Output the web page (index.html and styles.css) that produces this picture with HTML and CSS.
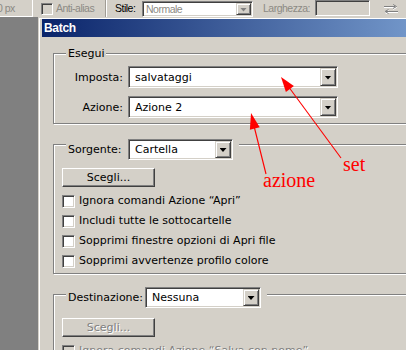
FILE: index.html
```html
<!DOCTYPE html>
<html lang="it">
<head>
<meta charset="utf-8">
<title>Batch</title>
<link rel="stylesheet" href="styles.css">
</head>
<body>
<div class="page">
  <div class="toolbar">
    <div class="tb-field"><span>0 px</span></div>
    <span class="tb-check"></span>
    <span class="tb-label dis tb-aa">Anti-alias</span>
    <span class="tb-sep"></span>
    <span class="tb-label tb-stile">Stile:</span>
    <div class="tb-select"><span class="tb-sel-text">Normale</span><span class="tb-drop"><i class="arrow arrow-dis"></i></span></div>
    <span class="tb-label dis tb-larg">Larghezza:</span>
    <div class="tb-input"></div>
    <svg class="tb-swap" width="16" height="10" viewBox="0 0 16 10">
      <path d="M1 3.5H12M10 1.5L13.5 3.5L10 5.5" fill="none" stroke="#fff" stroke-width="1"/>
      <path d="M1 2.5H12M10 0.5L13.5 2.5L10 4.5" fill="none" stroke="#808080" stroke-width="1"/>
      <path d="M3 8.5H15M5.5 6.5L2 8.5L5.5 10.5" fill="none" stroke="#fff" stroke-width="1"/>
      <path d="M3 7.5H15M5.5 5.5L2 7.5L5.5 9.5" fill="none" stroke="#808080" stroke-width="1"/>
    </svg>
  </div>

  <div class="workspace">
    <div class="side"></div>
    <div class="dialog">
      <div class="titlebar">Batch</div>
      <div class="dlg-body">

        <div class="group g-esegui">
          <div class="legend"><span class="legend-text">Esegui</span></div>
          <div class="form-grid">
            <span class="f-label">Imposta:</span>
            <div class="select sel-wide"><span class="val">salvataggi</span><span class="drop"><i class="arrow"></i></span></div>
            <span class="f-label">Azione:</span>
            <div class="select sel-wide"><span class="val">Azione 2</span><span class="drop"><i class="arrow"></i></span></div>
          </div>
        </div>

        <div class="group g-src">
          <div class="legend legend-ctrl">
            <span class="lbl lbl-src">Sorgente:</span>
            <div class="select sel-src"><span class="val">Cartella</span><span class="drop"><i class="arrow"></i></span></div>
          </div>
          <div class="btn">Scegli...</div>
          <div class="checks">
            <div class="check"><span class="box"></span><span>Ignora comandi Azione “Apri”</span></div>
            <div class="check"><span class="box"></span><span>Includi tutte le sottocartelle</span></div>
            <div class="check"><span class="box"></span><span>Sopprimi finestre opzioni di Apri file</span></div>
            <div class="check"><span class="box"></span><span>Sopprimi avvertenze profilo colore</span></div>
          </div>
        </div>

        <div class="group g-dst">
          <div class="legend legend-ctrl legend-dst">
            <span class="lbl lbl-dst">Destinazione:</span>
            <div class="select sel-dst"><span class="val">Nessuna</span><span class="drop"><i class="arrow"></i></span></div>
          </div>
          <div class="btn btn-dis">Scegli...</div>
          <div class="checks checks-dis">
            <div class="check"><span class="box box-dis"></span><span class="dis-text">Ignora comandi Azione “Salva con nome”</span></div>
          </div>
        </div>

      </div>
    </div>
  </div>

  <svg class="annot" width="406" height="350" viewBox="0 0 406 350">
    <line x1="341" y1="158" x2="288" y2="86" stroke="#ff0000" stroke-width="1.1"/>
    <polygon points="281,77 293.9,86.1 285.9,92.1" fill="#ff0000"/>
    <line x1="266" y1="174" x2="254" y2="126" stroke="#ff0000" stroke-width="1.1"/>
    <polygon points="251,113 259.7,127.3 249.9,129.7" fill="#ff0000"/>
  </svg>
  <span class="note note-set">set</span>
  <span class="note note-azione">azione</span>
</div>
</body>
</html>
```

FILE: styles.css
```css
* { box-sizing: border-box; }
html, body { margin: 0; padding: 0; }
body {
  width: 406px;
  height: 350px;
  overflow: hidden;
  background: #d4d0c8;
  font-family: "DejaVu Sans", sans-serif;
  font-size: 11px;
  color: #000;
}
.page {
  position: relative;
  width: 406px;
  height: 350px;
  overflow: hidden;
}

/* ---------- toolbar ---------- */
.toolbar {
  display: flex;
  align-items: flex-start;
  height: 17px;
  background: #d4d0c8;
  font-family: "Liberation Sans", sans-serif;
  font-size: 10.5px;
  letter-spacing: -0.5px;
  white-space: nowrap;
}
.tb-field {
  flex: none;
  width: 33px;
  height: 17px;
  border-right: 1px solid #fff;
  border-bottom: 1px solid #fff;
  overflow: hidden;
  line-height: 16px;
  color: #8c8a84;
  text-indent: -3px;
}
.tb-check {
  flex: none;
  width: 12px;
  height: 12px;
  margin: 3px 0 0 8px;
  border: 1px solid;
  border-color: #808080 #fff #fff #808080;
  box-shadow: inset 1px 1px #404040, inset -1px -1px #d4d0c8;
  background: #d4d0c8;
}
.tb-label { flex: none; line-height: 17px; }
.tb-label.dis { color: #8c8a84; }
.tb-aa { width: 49px; margin-left: 3px; }
.tb-sep {
  flex: none;
  width: 2px;
  height: 17px;
  border-left: 1px solid #a09c94;
  border-right: 1px solid #fff;
}
.tb-stile { width: 27px; margin-left: 8px; }
.tb-select {
  flex: none;
  display: flex;
  width: 111px;
  height: 16px;
  margin-top: 1px;
  background: #fff;
  border: 1px solid;
  border-color: #808080 #fff #fff #808080;
  box-shadow: inset 1px 1px #404040, inset -1px -1px #d4d0c8;
  padding: 1px;
}
.tb-sel-text {
  flex: 1;
  padding-left: 2px;
  line-height: 12px;
  color: #8c8a84;
}
.tb-drop {
  flex: none;
  width: 15px;
  height: 12px;
  background: #d4d0c8;
  border: 1px solid;
  border-color: #d4d0c8 #404040 #404040 #d4d0c8;
  box-shadow: inset 1px 1px #fff, inset -1px -1px #808080;
  display: flex;
  align-items: center;
  justify-content: center;
}
.tb-larg { width: 52px; margin-left: 10px; }
.tb-input {
  flex: none;
  width: 55px;
  height: 16px;
  border: 1px solid;
  border-color: #808080 #fff #fff #808080;
  box-shadow: inset 1px 1px #404040;
  background: #d4d0c8;
}
.tb-swap { flex: none; margin: 4px 0 0 13px; display: block; }

/* ---------- workspace & dialog ---------- */
.workspace {
  display: flex;
  height: 333px;
}
.side {
  flex: none;
  width: 38px;
  background: #808080;
}
.dialog {
  flex: none;
  width: 640px;
  background: #d4d0c8;
  border-top: 1px solid #d4d0c8;
  border-left: 1px solid #d4d0c8;
  box-shadow: inset 1px 1px #fff;
  padding: 1px 0 0 3px;
}
.titlebar {
  height: 18px;
  line-height: 18px;
  padding-left: 2px;
  background: linear-gradient(to right, #0a246a 0px, #7195c8 364px, #8aaad6 600px);
  color: #fff;
  font-family: "Liberation Sans", sans-serif;
  font-weight: bold;
  font-size: 12px;
  letter-spacing: -0.3px;
}
.dlg-body {
  padding-left: 11px;
}

/* ---------- groups ---------- */
.group {
  width: 600px;
  border: 1px solid #808080;
  box-shadow: inset 1px 1px #fff, 1px 1px #fff;
}
.g-esegui { margin-top: 16px; padding-bottom: 5px; }
.g-src { margin-top: 20px; padding-bottom: 2px; }
.g-dst { margin-top: 20px; }

.legend {
  display: flex;
  width: max-content;
  margin: -7px 0 0 12px;
  line-height: 13px;
}
.legend-text {
  background: #d4d0c8;
  padding: 0 2px;
}
.legend-ctrl {
  align-items: center;
  margin-top: -6px;
  padding: 0 6px 0 2px;
  background: #d4d0c8;
  gap: 6px;
}
.legend-dst { margin-top: -8px; }
.lbl { white-space: nowrap; }
.lbl-src { width: 54px; }
.lbl-dst { width: 71px; }

.form-grid {
  display: grid;
  grid-template-columns: 61px 210px;
  column-gap: 5px;
  row-gap: 8px;
  margin-top: 6px;
  padding-left: 8px;
  align-items: center;
}
.f-label { text-align: right; white-space: nowrap; }

/* ---------- select ---------- */
.select {
  display: flex;
  height: 22px;
  background: #fff;
  border: 1px solid;
  border-color: #808080 #fff #fff #808080;
  box-shadow: inset 1px 1px #404040, inset -1px -1px #d4d0c8;
  padding: 1px;
}
.sel-src { width: 105px; height: 21px; }
.sel-dst { width: 116px; height: 21px; }
.val {
  flex: 1;
  padding-left: 5px;
  display: flex;
  align-items: center;
  white-space: nowrap;
  overflow: hidden;
}
.drop {
  flex: none;
  width: 16px;
  background: #d4d0c8;
  border: 1px solid;
  border-color: #d4d0c8 #404040 #404040 #d4d0c8;
  box-shadow: inset 1px 1px #fff, inset -1px -1px #808080;
  display: flex;
  align-items: center;
  justify-content: center;
}
.arrow {
  display: block;
  width: 7px;
  height: 4px;
  margin-top: 1px;
  background: #000;
  clip-path: polygon(0 0, 100% 0, 50% 100%);
}
.arrow-dis { background: #808080; width: 7px; height: 4px; }

/* ---------- buttons ---------- */
.btn {
  width: 93px;
  height: 19px;
  margin: 8px 0 0 8px;
  border: 1px solid;
  border-color: #fff #404040 #404040 #fff;
  box-shadow: inset -1px -1px #808080;
  background: #d4d0c8;
  text-align: center;
  line-height: 17px;
}
.btn-dis {
  margin-top: 10px;
  color: #808080;
  text-shadow: 1px 1px #fff;
}

/* ---------- checkboxes ---------- */
.checks {
  margin-top: 4px;
  padding-left: 8px;
}
.check {
  display: flex;
  align-items: flex-start;
  height: 20px;
  line-height: 20px;
  white-space: nowrap;
  gap: 4px;
}
.box {
  flex: none;
  width: 13px;
  height: 13px;
  margin-top: 4px;
  background: #fff;
  border: 1px solid;
  border-color: #808080 #fff #fff #808080;
  box-shadow: inset 1px 1px #404040, inset -1px -1px #d4d0c8;
}
.box-dis { background: #d4d0c8; }
.dis-text { color: #808080; text-shadow: 1px 1px #fff; }

/* ---------- annotations ---------- */
.annot {
  position: absolute;
  left: 0;
  top: 0;
  pointer-events: none;
}
.note {
  position: absolute;
  font-family: "Liberation Serif", serif;
  font-size: 20px;
  line-height: 20px;
  color: #ff0000;
}
.note-set { left: 343px; top: 154px; }
.note-azione { left: 263px; top: 170px; }
```
